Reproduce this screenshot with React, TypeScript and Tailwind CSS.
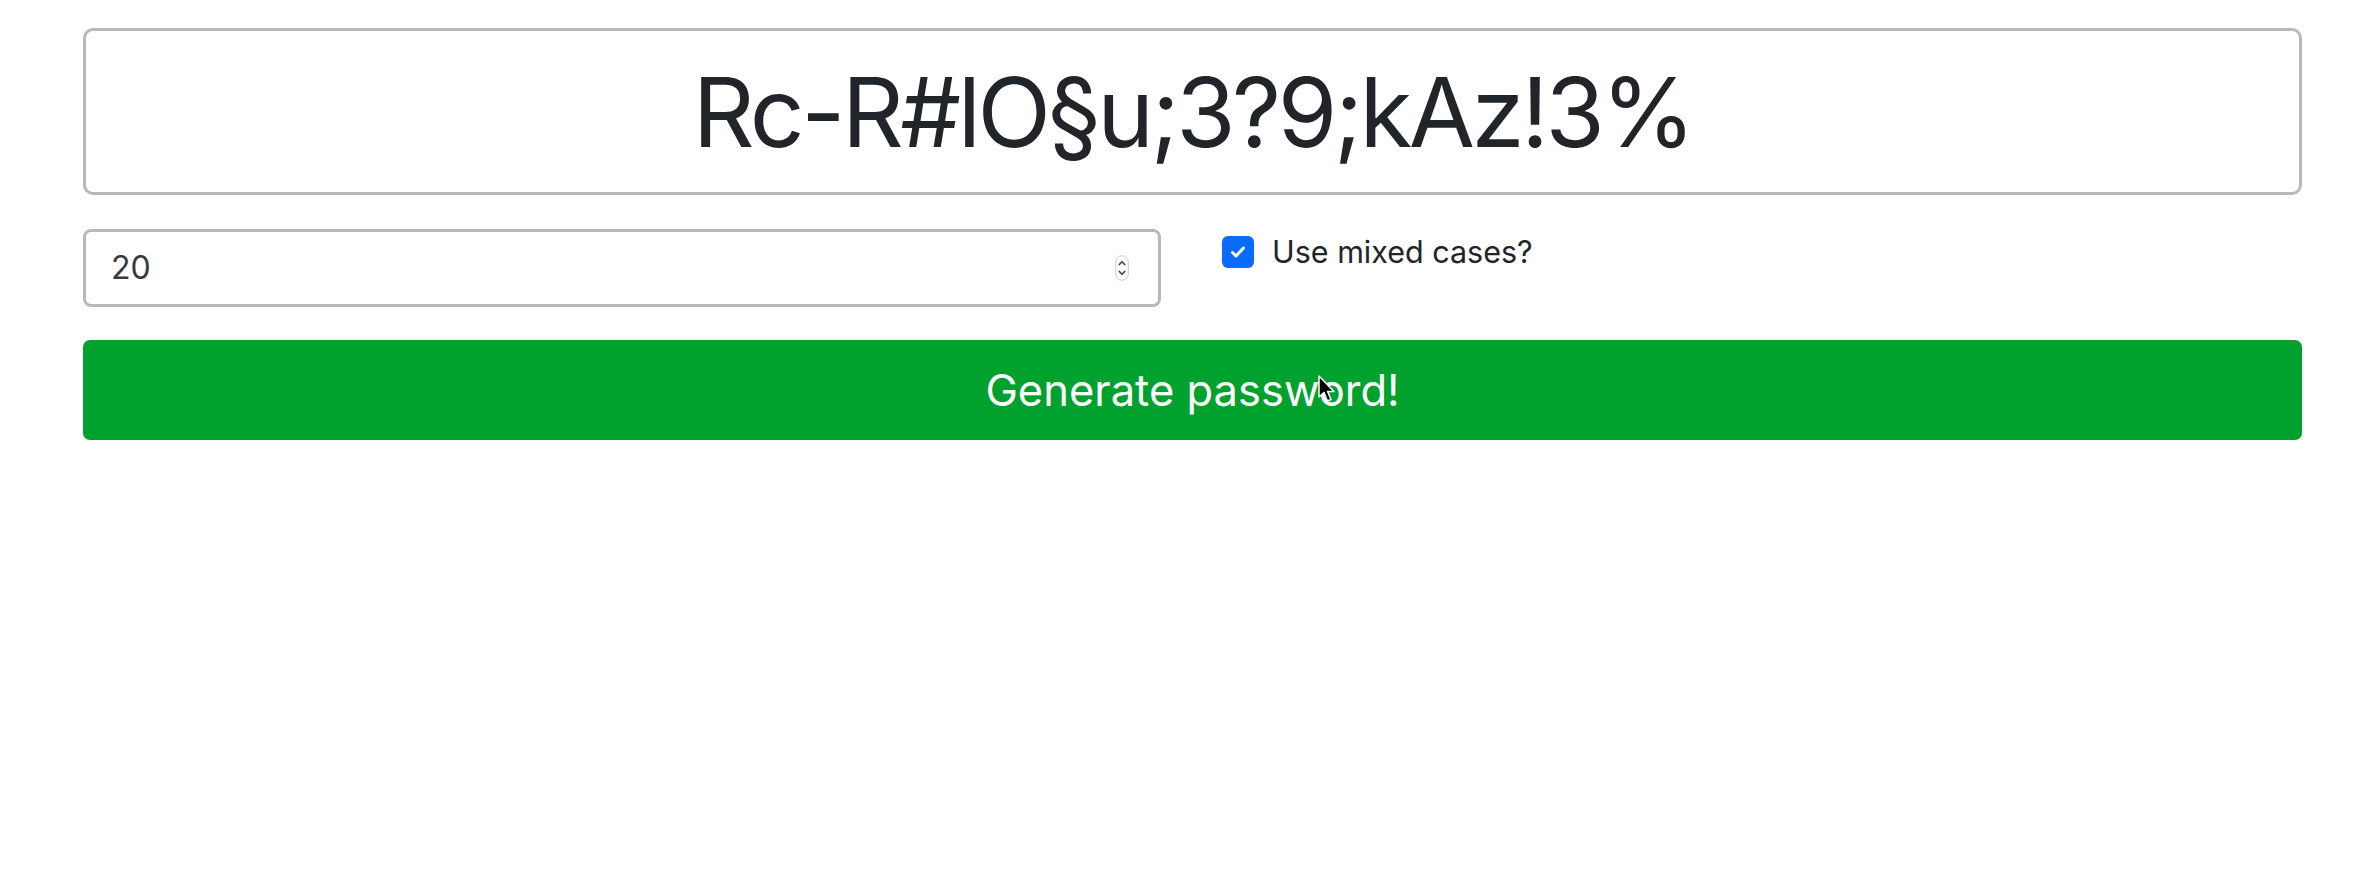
import React, { useState } from 'react';

const font = { fontFamily: 'Inter, "Liberation Sans", sans-serif' };

const Spinner: React.FC = () => (
  <svg width="14" height="26" viewBox="0 0 14 26" className="shrink-0">
    <rect x="0.75" y="0.75" width="12.5" height="24.5" rx="6.25" fill="#fff" stroke="#c8c8c8" strokeWidth="1" />
    <path d="M4.2 9.6 L7 6.8 L9.8 9.6" fill="none" stroke="#444" strokeWidth="1.5" strokeLinecap="round" strokeLinejoin="round" />
    <path d="M4.2 16.4 L7 19.2 L9.8 16.4" fill="none" stroke="#444" strokeWidth="1.5" strokeLinecap="round" strokeLinejoin="round" />
  </svg>
);

const Cursor: React.FC = () => (
  <svg width="20" height="30" viewBox="0 0 20 30" className="absolute left-[1318px] top-[375px] pointer-events-none">
    <path d="M1 1 L1 22 L6 17.5 L9.5 26 L13 24.5 L9.6 16.4 L16 16.4 Z" fill="#000" stroke="#fff" strokeWidth="1.5" strokeLinejoin="round" />
  </svg>
);

const App: React.FC = () => {
  const [mixed, setMixed] = useState(true);
  const password = 'Rc-R#lO§u;3?9;kAz!3%';

  return (
    <div className="relative min-h-[878px] w-full bg-white pl-[83px] pr-[74px] pt-[28px]" style={font}>
      {/* generated password */}
      <div className="flex h-[167px] items-center justify-center rounded-[10px] border-[3px] border-[#b9b9b9] bg-white">
        <span className="text-[96px] leading-none tracking-[-3.4px] text-[#212529]">{password}</span>
      </div>

      {/* options */}
      <div className="mt-[34px] flex items-start">
        <div className="flex h-[78px] w-[1078px] items-center justify-between rounded-[8px] border-[3px] border-[#b9b9b9] bg-white pl-[25px] pr-[29px]">
          <span className="text-[32px] leading-none text-[#343a40]">20</span>
          <Spinner />
        </div>
        <label className="ml-[61px] mt-[7px] flex cursor-pointer items-center gap-[18px]">
          <button
            onClick={() => setMixed(!mixed)}
            className="flex h-[32px] w-[32px] items-center justify-center rounded-[6px] bg-[#0a6cff]"
          >
            {mixed && (
              <svg width="16" height="14" viewBox="0 0 16 14">
                <path d="M2.5 7.5 L6 11 L13.5 3" fill="none" stroke="#fff" strokeWidth="3" strokeLinecap="round" strokeLinejoin="round" />
              </svg>
            )}
          </button>
          <span className="text-[30.5px] leading-none text-[#212529]">Use mixed cases?</span>
        </label>
      </div>

      {/* action */}
      <button className="mt-[33px] flex h-[100px] w-full items-center justify-center rounded-[7px] bg-[#00a12d] pt-[2px] text-[43.5px] text-white">
        Generate password!
      </button>

      <Cursor />
    </div>
  );
};

export default App;
